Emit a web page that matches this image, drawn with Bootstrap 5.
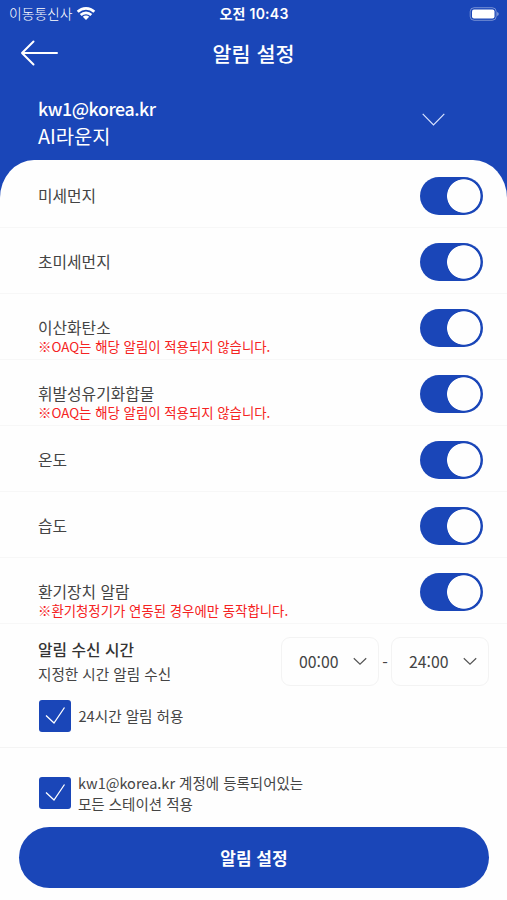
<!DOCTYPE html>
<html lang="ko">
<head>
<meta charset="utf-8">
<meta name="viewport" content="width=device-width, initial-scale=1">
<title>알림 설정</title>
<link href="https://cdn.jsdelivr.net/npm/bootstrap@5.3.0/dist/css/bootstrap.min.css" rel="stylesheet">
<style>
:root { --brand: #1a46b8; }
body { font-family: "Noto Sans CJK KR", sans-serif; color: #444; background: #fefefe; height: 900px; overflow: hidden; }
svg { display: block; flex: none; }
.top-area { background: var(--brand); height: 198px; }
.status-bar { height: 27px; line-height: 27px; padding: 0 8px 0 9px; }
.status-bar > div { flex: 1 1 0; }
.carrier { font-size: 13.8px; letter-spacing: 0; font-weight: 300; }
.clock { font-family: "Inter", "Noto Sans CJK KR", sans-serif; font-weight: 600; font-size: 14px; letter-spacing: .25px; }
.title-bar { height: 52px; padding: 0 20px; }
.title-bar > * { flex: 1 1 0; }
.page-title { font-size: 20.7px; font-weight: 500; line-height: 30px; }
.station { height: 81px; padding: 15px 62px 0 38px; }
.station-mail { font-size: 17.8px; letter-spacing: -.45px; font-weight: 500; line-height: 28px; }
.station-name { font-size: 19.8px; line-height: 28px; }
.station-arrow { margin-top: 19px; }
.panel { background: #fefefe; margin-top: -38px; border-radius: 34px 34px 0 0 / 38px 38px 0 0; }
.alarm-row { height: 66px; border-top: 1px solid #f7f7f7; padding: 0 24px 0 38px; }
.alarm-row:first-child { height: 67px; border-top: 0; padding-top: 2px; }
.alarm-label { font-size: 15.8px; line-height: 20px; padding-top: 24px; }
.alarm-note { font-size: 13.4px; line-height: 17px; color: #f52222; }
.form-switch.toggle { padding: 15px 0 0; margin: 0; min-height: 0; }
.form-switch.toggle .form-check-input { width: 63px; height: 38px; margin: 0; float: none; display: block; border: 0; background-color: var(--brand); border-radius: 19px;
  background-image: radial-gradient(circle 16.8px at 43.8px 19px, #fefefe 16.3px, transparent 17.1px); background-size: 100% 100%; background-position: 0 0; }
.time-area { height: 124px; padding: 13px 18px 0 38px; border-top: 1px solid #f7f7f7; }
.time-title { font-size: 15.8px; font-weight: 500; line-height: 25px; color: #333; }
.time-desc { font-size: 14.6px; line-height: 24px; }
.time-box { width: 98px; height: 49px; border: 1px solid #f3f3f3; border-radius: 9px; font-size: 15.8px; padding: 0 11px 0 17px; }
.time-dash { width: 12px; }
.allow { padding-top: 14px; }
.tick { width: 32px; height: 32px; border-radius: 3px; background: var(--brand); flex: none; margin-left: .5px; }
.allow-label { font-size: 14.6px; line-height: 20px; }
.apply-area { height: 80px; padding: 24px 38px 0; border-top: 1px solid #f4f4f4; }
.apply-area .tick { margin-top: 5px; }
.apply-label { font-size: 14.5px; line-height: 21px; margin-left: -.5px; }
.submit { --bs-btn-bg: var(--brand); --bs-btn-hover-bg: var(--brand); margin: 0 18px 0 19px; height: 61px; border-radius: 31px; border: 0; font-size: 17px; font-weight: 700; }
</style>
</head>
<body>
<header class="top-area text-white">
  <div class="status-bar d-flex align-items-center">
    <div class="d-flex align-items-center">
      <span class="carrier">이동통신사</span>
      <svg class="ms-1" width="20" height="15" viewBox="0 0 20 15" fill="none" stroke="#fff" stroke-width="2.7"><path d="M1.7 5.700A11.800 11.800 0 0 1 18.300 5.700"/><path d="M4.700 9A7.600 7.600 0 0 1 15.300 9"/><path d="M10 14 6.800 10.800A4.600 4.600 0 0 1 13.200 10.800Z" fill="#fff" stroke="none"/></svg>
    </div>
    <div class="clock text-center">오전 10:43</div>
    <div class="d-flex justify-content-end">
      <svg width="30" height="14" viewBox="0 0 30 14"><rect x="1.200" y=".7" width="26" height="12.6" rx="4" fill="none" stroke="#fff" stroke-opacity=".4"/><rect x="3" y="2.500" width="22.500" height="9" rx="2" fill="#fff"/><path d="M28.200 5v4q1.500-.6 1.500-2t-1.500-2" fill="#fff" opacity=".5"/></svg>
    </div>
  </div>
  <div class="title-bar d-flex align-items-center">
    <div><svg width="39" height="26" viewBox="0 0 39 26" fill="none" stroke="#fff" stroke-width="2" stroke-linecap="round" stroke-linejoin="round"><path d="M13.500 1.500 2 13l11.500 11.500M2 13h35"/></svg></div>
    <h1 class="page-title text-center m-0">알림 설정</h1>
    <div></div>
  </div>
  <div class="station d-flex justify-content-between">
    <div>
      <div class="station-mail">kw1@korea.kr</div>
      <div class="station-name">AI라운지</div>
    </div>
    <svg class="station-arrow" width="23" height="13" viewBox="0 0 23 13" fill="none" stroke="#d9e3ff" stroke-width="1.2"><path d="M.7.8 11.500 11.800 22.300.8"/></svg>
  </div>
</header>

<main class="panel">
  <div>
    <div class="alarm-row d-flex justify-content-between"><div class="alarm-label">미세먼지</div><div class="form-check form-switch toggle"><input class="form-check-input" type="checkbox" checked></div></div>
    <div class="alarm-row d-flex justify-content-between"><div class="alarm-label">초미세먼지</div><div class="form-check form-switch toggle"><input class="form-check-input" type="checkbox" checked></div></div>
    <div class="alarm-row d-flex justify-content-between"><div><div class="alarm-label">이산화탄소</div><div class="alarm-note">※OAQ는 해당 알림이 적용되지 않습니다.</div></div><div class="form-check form-switch toggle"><input class="form-check-input" type="checkbox" checked></div></div>
    <div class="alarm-row d-flex justify-content-between"><div><div class="alarm-label">휘발성유기화합물</div><div class="alarm-note">※OAQ는 해당 알림이 적용되지 않습니다.</div></div><div class="form-check form-switch toggle"><input class="form-check-input" type="checkbox" checked></div></div>
    <div class="alarm-row d-flex justify-content-between"><div class="alarm-label">온도</div><div class="form-check form-switch toggle"><input class="form-check-input" type="checkbox" checked></div></div>
    <div class="alarm-row d-flex justify-content-between"><div class="alarm-label">습도</div><div class="form-check form-switch toggle"><input class="form-check-input" type="checkbox" checked></div></div>
    <div class="alarm-row d-flex justify-content-between"><div><div class="alarm-label">환기장치 알람</div><div class="alarm-note">※환기청정기가 연동된 경우에만 동작합니다.</div></div><div class="form-check form-switch toggle"><input class="form-check-input" type="checkbox" checked></div></div>
  </div>

  <section class="time-area">
    <div class="d-flex justify-content-between">
      <div>
        <div class="time-title">알림 수신 시간</div>
        <div class="time-desc">지정한 시간 알림 수신</div>
      </div>
      <div class="d-flex align-items-center">
        <div class="time-box d-flex align-items-center justify-content-between">00:00<svg width="14" height="9" viewBox="0 0 14 9" fill="none" stroke="#555" stroke-width="1.2"><path d="M.8 1.200 7 7.200 13.200 1.200"/></svg></div>
        <div class="time-dash text-center">-</div>
        <div class="time-box d-flex align-items-center justify-content-between">24:00<svg width="14" height="9" viewBox="0 0 14 9" fill="none" stroke="#555" stroke-width="1.2"><path d="M.8 1.200 7 7.200 13.200 1.200"/></svg></div>
      </div>
    </div>
    <div class="allow d-flex align-items-center gap-2">
      <div class="tick"><svg width="32" height="32" viewBox="0 0 32 32" fill="none" stroke="#fff" stroke-width="1.3"><path d="M7 15.500 15 23 25.500 7.500"/></svg></div>
      <span class="allow-label">24시간 알림 허용</span>
    </div>
  </section>

  <section class="apply-area d-flex align-items-start gap-2">
    <div class="tick"><svg width="32" height="32" viewBox="0 0 32 32" fill="none" stroke="#fff" stroke-width="1.3"><path d="M7 15.500 15 23 25.500 7.500"/></svg></div>
    <div class="apply-label">kw1@korea.kr 계정에 등록되어있는<br>모든 스테이션 적용</div>
  </section>

  <div class="d-grid"><button type="button" class="btn btn-primary submit">알림 설정</button></div>
</main>
<script src="https://cdn.jsdelivr.net/npm/bootstrap@5.3.0/dist/js/bootstrap.bundle.min.js"></script>
</body>
</html>
